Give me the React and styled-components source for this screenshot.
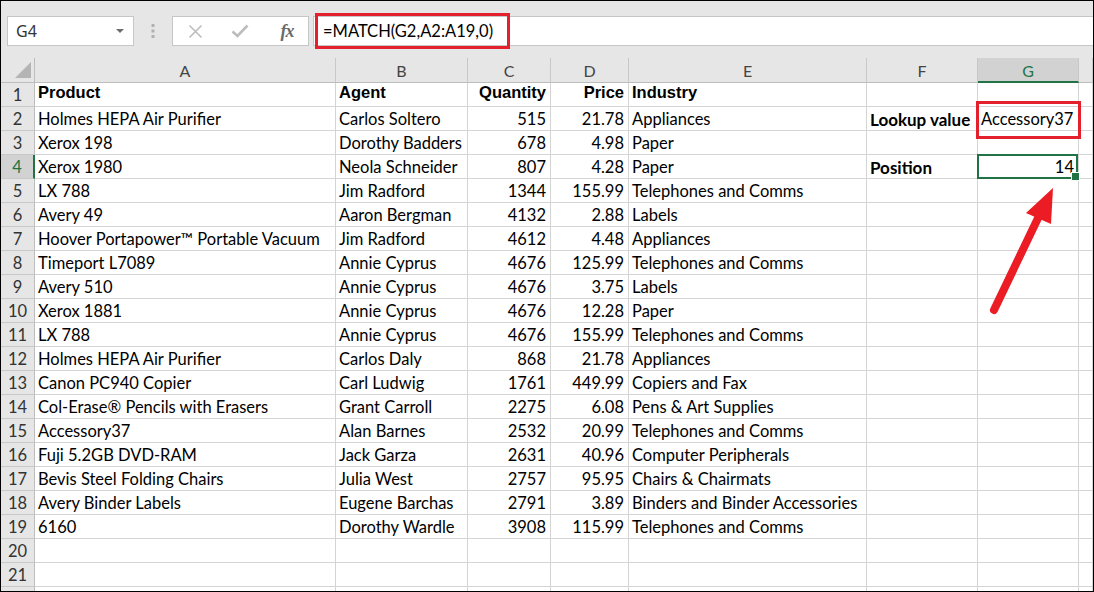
import React from 'react';
import styled, { createGlobalStyle } from 'styled-components';

const Global = createGlobalStyle`
  html, body { margin: 0; padding: 0; background: #fff; }
  body { font-family: "Lato", "Liberation Sans", sans-serif; }
  * { box-sizing: border-box; }
`;

const Window = styled.div`
  position: relative;
  width: 1094px;
  height: 592px;
  border: 1px solid #000;
  overflow: hidden;
  background: #e6e6e6;
  display: flex;
  flex-direction: column;
`;

const Toolbar = styled.div`
  flex: none;
  height: 57px;
  padding: 15px 0 12px 6px;
  display: flex;
  align-items: stretch;
`;

const NameBox = styled.div`
  width: 127px;
  background: #fff;
  border: 1px solid #c6c6c6;
  display: flex;
  align-items: center;
  justify-content: space-between;
  padding: 0 9px 0 8px;
  font-family: "Noto Sans", "Open Sans", sans-serif;
  font-size: 16px;
  color: #333;
`;

const Caret = styled.span`
  width: 0;
  height: 0;
  border-left: 4px solid transparent;
  border-right: 4px solid transparent;
  border-top: 4px solid #6d6d6d;
`;

const Grip = styled.div`
  width: 38px;
  display: flex;
  align-items: center;
  justify-content: center;
`;

const FxBox = styled.div`
  width: 137px;
  background: #fff;
  border: 1px solid #c6c6c6;
  display: flex;
  align-items: center;
  padding: 0 0 0 14px;
`;

const FxButton = styled.span`
  width: ${p => p.$w}px;
  display: flex;
  justify-content: center;
  align-items: center;
`;

const FxLabel = styled.span`
  font-family: "Liberation Serif", serif;
  font-style: italic;
  font-weight: bold;
  font-size: 18px;
  color: #6a6a6a;
  letter-spacing: -1px;
`;

const FormulaInput = styled.div`
  position: relative;
  flex: 1;
  margin-left: 4px;
  background: #fff;
  border: 1px solid #c6c6c6;
  border-right: none;
  display: flex;
  align-items: center;
  padding-left: 9px;
  font-family: "Lato", sans-serif;
  font-size: 16.5px;
  color: #000;
`;

const FormulaHighlight = styled.div`
  position: absolute;
  left: 1px;
  top: -4px;
  width: 195px;
  height: 36px;
  border: 3px solid #e3202b;
`;

const Sheet = styled.div`
  flex: 1;
  position: relative;
  display: grid;
  grid-template-columns: 34px 301px 132px 83px 78px 238px 111px 101px 1fr;
  grid-template-rows: 25px;
  grid-auto-rows: 24px;
  background: #fff;
`;

const Corner = styled.div`
  position: relative;
  background: #e6e6e6;
  border-right: 1px solid #bdbdbd;
  border-bottom: 1px solid #bdbdbd;
  &::after {
    content: "";
    position: absolute;
    right: 3px;
    bottom: 4px;
    width: 16px;
    height: 16px;
    background: #b4b4b4;
    clip-path: polygon(100% 0, 100% 100%, 0 100%);
  }
`;

const ColHead = styled.div`
  background: ${p => (p.$active ? '#d2d2d2' : '#e6e6e6')};
  border-right: 1px solid #c8c8c8;
  border-bottom: ${p => (p.$active ? '2px solid #217346' : '1px solid #bdbdbd')};
  display: flex;
  align-items: center;
  justify-content: center;
  padding-top: ${p => (p.$active ? '1px' : '0')};
  font-size: 16px;
  color: ${p => (p.$active ? '#217346' : '#444')};
`;

const RowHead = styled.div`
  background: ${p => (p.$active ? '#d2d2d2' : '#e6e6e6')};
  border-right: ${p => (p.$active ? '2px solid #217346' : '1px solid #bdbdbd')};
  border-bottom: 1px solid #c8c8c8;
  display: flex;
  align-items: center;
  justify-content: center;
  font-size: 16.5px;
  color: ${p => (p.$active ? '#217346' : '#333')};
`;

const Cell = styled.div`
  position: relative;
  border-right: 1px solid #d4d4d4;
  border-bottom: 1px solid #d4d4d4;
  display: flex;
  align-items: center;
  justify-content: ${p => (p.$right ? 'flex-end' : 'flex-start')};
  padding: ${p => (p.$heading ? '0 4px 4px 3px' : `1px ${p.$right ? '4px' : '2px'} 0 3px`)};
  white-space: nowrap;
  font-family: ${p => (p.$heading ? '"Liberation Sans", Arial, sans-serif' : '"Lato", sans-serif')};
  font-weight: ${p => (p.$heading || p.$label ? 700 : 400)};
  font-size: ${p => (p.$label ? '17px' : '16.5px')};
  color: #000;
`;

const Selection = styled.div`
  position: absolute;
  left: -1px;
  top: -1px;
  right: 0;
  bottom: -1px;
  border: 2px solid #217346;
  z-index: 2;
  pointer-events: none;
  &::after {
    content: "";
    position: absolute;
    right: -4px;
    bottom: -4px;
    width: 7px;
    height: 7px;
    background: #217346;
    border: 1px solid #fff;
  }
`;

const LookupHighlight = styled.div`
  position: absolute;
  left: -2px;
  top: -6px;
  width: 105px;
  height: 38px;
  border: 3px solid #e3202b;
  z-index: 3;
  pointer-events: none;
`;

const Arrow = styled.svg`
  position: absolute;
  left: 978px;
  top: 122px;
  width: 90px;
  height: 140px;
  z-index: 4;
  overflow: visible;
`;

const columns = ['A', 'B', 'C', 'D', 'E', 'F', 'G', 'H'];

const rows = [
  ['Product', 'Agent', 'Quantity', 'Price', 'Industry', '', ''],
  ['Holmes HEPA Air Purifier', 'Carlos Soltero', '515', '21.78', 'Appliances', 'Lookup value', 'Accessory37'],
  ['Xerox 198', 'Dorothy Badders', '678', '4.98', 'Paper', '', ''],
  ['Xerox 1980', 'Neola Schneider', '807', '4.28', 'Paper', 'Position', '14'],
  ['LX 788', 'Jim Radford', '1344', '155.99', 'Telephones and Comms', '', ''],
  ['Avery 49', 'Aaron Bergman', '4132', '2.88', 'Labels', '', ''],
  ['Hoover Portapower™ Portable Vacuum', 'Jim Radford', '4612', '4.48', 'Appliances', '', ''],
  ['Timeport L7089', 'Annie Cyprus', '4676', '125.99', 'Telephones and Comms', '', ''],
  ['Avery 510', 'Annie Cyprus', '4676', '3.75', 'Labels', '', ''],
  ['Xerox 1881', 'Annie Cyprus', '4676', '12.28', 'Paper', '', ''],
  ['LX 788', 'Annie Cyprus', '4676', '155.99', 'Telephones and Comms', '', ''],
  ['Holmes HEPA Air Purifier', 'Carlos Daly', '868', '21.78', 'Appliances', '', ''],
  ['Canon PC940 Copier', 'Carl Ludwig', '1761', '449.99', 'Copiers and Fax', '', ''],
  ['Col-Erase® Pencils with Erasers', 'Grant Carroll', '2275', '6.08', 'Pens & Art Supplies', '', ''],
  ['Accessory37', 'Alan Barnes', '2532', '20.99', 'Telephones and Comms', '', ''],
  ['Fuji 5.2GB DVD-RAM', 'Jack Garza', '2631', '40.96', 'Computer Peripherals', '', ''],
  ['Bevis Steel Folding Chairs', 'Julia West', '2757', '95.95', 'Chairs & Chairmats', '', ''],
  ['Avery Binder Labels', 'Eugene Barchas', '2791', '3.89', 'Binders and Binder Accessories', '', ''],
  ['6160', 'Dorothy Wardle', '3908', '115.99', 'Telephones and Comms', '', ''],
  ['', '', '', '', '', '', ''],
  ['', '', '', '', '', '', ''],
  ['', '', '', '', '', '', ''],
];

const VISIBLE_ROW_NUMBERS = 21;

const isRight = (r, c) => c === 2 || c === 3 || (c === 6 && r === 3);

export default function App() {
  return (
    <>
      <Global />
      <Window>
        <Toolbar>
          <NameBox>
            <span>G4</span>
            <Caret />
          </NameBox>
          <Grip>
            <svg width="4" height="16" viewBox="0 0 4 16">
              <rect x="0.5" y="1" width="3" height="3" fill="#b0b0b0" />
              <rect x="0.5" y="6.5" width="3" height="3" fill="#b0b0b0" />
              <rect x="0.5" y="12" width="3" height="3" fill="#b0b0b0" />
            </svg>
          </Grip>
          <FxBox>
            <FxButton $w={16}>
              <svg width="15" height="15" viewBox="0 0 15 15">
                <path d="M1.5 1.5 L13.5 13.5 M13.5 1.5 L1.5 13.5" stroke="#bdbdbd" strokeWidth="1.6" fill="none" />
              </svg>
            </FxButton>
            <FxButton $w={74}>
              <svg width="18" height="14" viewBox="0 0 18 14">
                <path d="M1.5 7.5 L6.5 12 L16.5 1.5" stroke="#bdbdbd" strokeWidth="2.6" fill="none" />
              </svg>
            </FxButton>
            <FxButton $w={20}>
              <FxLabel>fx</FxLabel>
            </FxButton>
          </FxBox>
          <FormulaInput>
            =MATCH(G2,A2:A19,0)
            <FormulaHighlight />
          </FormulaInput>
        </Toolbar>
        <Sheet>
          <Corner />
          {columns.map(c => (
            <ColHead key={c} $active={c === 'G'}>{c === 'H' ? '' : c}</ColHead>
          ))}
          {rows.map((row, r) => (
            <React.Fragment key={r}>
              <RowHead $active={r === 3}>{r < VISIBLE_ROW_NUMBERS ? r + 1 : ''}</RowHead>
              {row.map((v, c) => (
                <Cell
                  key={c}
                  $right={isRight(r, c)}
                  $heading={r === 0}
                  $label={c === 5 && v !== ''}
                >
                  {v}
                  {r === 1 && c === 6 && <LookupHighlight />}
                  {r === 3 && c === 6 && <Selection />}
                </Cell>
              ))}
              <Cell />
            </React.Fragment>
          ))}
          <Arrow viewBox="0 0 90 140">
            <line x1="15" y1="130" x2="60" y2="36" stroke="#ec1c24" strokeWidth="8" strokeLinecap="round" />
            <polygon points="74,8 47,33 72,44" fill="#ec1c24" />
          </Arrow>
        </Sheet>
      </Window>
    </>
  );
}
